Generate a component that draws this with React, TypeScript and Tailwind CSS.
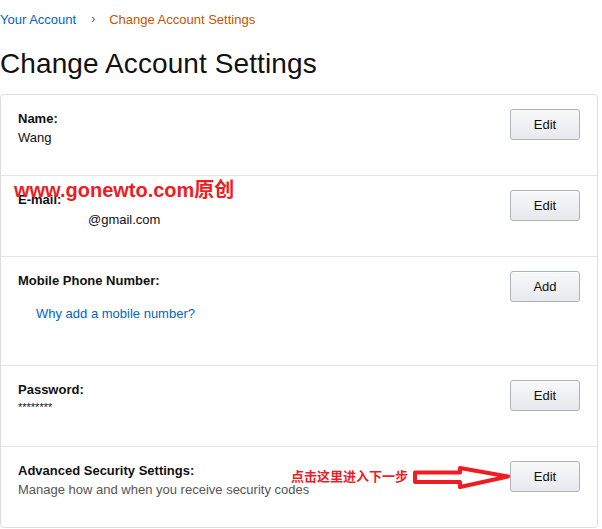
import React from 'react';

type Row = {
  label: string;
  value?: React.ReactNode;
  action: string;
  tall?: boolean;
};

function ActionButton({ children }: { children: React.ReactNode }) {
  return (
    <button className="w-[70px] h-[31px] shrink-0 rounded-[3px] border border-[#adb1b8] bg-gradient-to-b from-[#f7f8fa] to-[#e7e9ec] text-[13px] text-[#111] shadow-[0_1px_0_rgba(255,255,255,0.6)_inset]">
      {children}
    </button>
  );
}

export default function App() {
  const rows: Row[] = [
    { label: 'Name:', value: <div className="text-[13px] leading-[19px]">Wang</div>, action: 'Edit' },
    {
      label: 'E-mail:',
      value: <div className="text-[13px] leading-[19px] pl-[70px] mt-px">@gmail.com</div>,
      action: 'Edit',
    },
    {
      label: 'Mobile Phone Number:',
      value: (
        <div className="text-[13px] leading-[19px] pl-[18px] mt-[14px] text-[#0066c0]">Why add a mobile number?</div>
      ),
      action: 'Add',
      tall: true,
    },
    { label: 'Password:', value: <div className="text-[11px] leading-[15px] mt-px">********</div>, action: 'Edit' },
    {
      label: 'Advanced Security Settings:',
      value: <div className="text-[13px] leading-[19px] text-[#555]">Manage how and when you receive security codes</div>,
      action: 'Edit',
    },
  ];

  return (
    <div className="w-[602px] h-[529px] bg-white text-[#111] font-['Liberation_Sans',Arial,sans-serif] overflow-hidden">
      {/* breadcrumb */}
      <div className="flex items-center pt-[9px] h-[29px] text-[13px] leading-[19px]">
        <span className="text-[#0066c0]">Your Account</span>
        <span className="ml-[15px] mr-[14px] text-[#555] text-[12px]">›</span>
        <span className="text-[#c45500]">Change Account Settings</span>
      </div>

      <h1 className="mt-[17px] text-[28px] leading-[36px] font-normal tracking-[0.1px]">Change Account Settings</h1>

      {/* settings card */}
      <div className="relative mt-[12px] w-[598px] rounded-[4px] border border-[#dddddd]">
        {rows.map((row, i) => (
          <div
            key={row.label}
            className={`flex justify-between pl-[17px] pr-[17px] ${
              i === 0 ? 'h-[80px] pt-[14px]' : row.tall ? 'h-[109px] pt-[14px] border-t border-[#e3e3e3]' : 'h-[81px] pt-[14px] border-t border-[#e3e3e3]'
            }`}
          >
            <div>
              <div className="text-[13px] leading-[19px] font-bold">{row.label}</div>
              {row.value}
            </div>
            <ActionButton>{row.action}</ActionButton>
          </div>
        ))}

        {/* watermark */}
        <div className="absolute left-[13px] top-[83px] text-[20px] leading-[24px] font-bold text-[#ee1c25] font-['Liberation_Sans','Noto_Sans_CJK_SC',sans-serif]">
          www.gonewto.com原创
        </div>

        {/* annotation */}
        <div className="absolute left-[290px] top-[372px] text-[13px] leading-[18px] font-bold text-[#ee1c25] font-['Noto_Sans_CJK_SC',sans-serif]">
          点击这里进入下一步
        </div>
        <svg className="absolute left-[410px] top-[365px]" width="100" height="32" viewBox="0 0 100 32">
          <path
            d="M4 12.5 H49 V8 L97 16.5 L49 27 V22 H4 Z"
            fill="white"
            stroke="#ee1c25"
            strokeWidth="4"
            strokeLinejoin="round"
          />
        </svg>
      </div>
    </div>
  );
}
